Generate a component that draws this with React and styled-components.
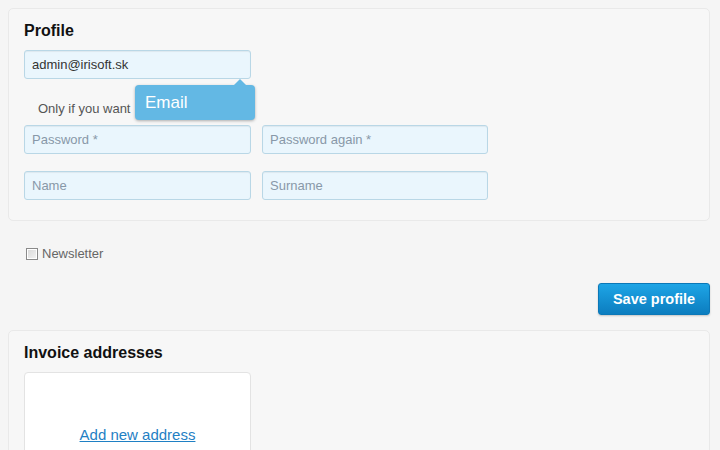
import React from "react";
import styled, { createGlobalStyle } from "styled-components";

const GlobalStyle = createGlobalStyle`
  html, body {
    margin: 0;
    background: #f5f5f5;
  }
  body {
    padding: 8px 10px 0 8px;
    font-family: "Liberation Sans", Arial, sans-serif;
    color: #333;
    overflow: hidden;
  }
`;

const Page = styled.div`
  width: 702px;
`;

const Panel = styled.section`
  background: #f7f7f7;
  border: 1px solid #e9e9e9;
  border-radius: 5px;
  padding: 12px 15px 20px;
`;

const Heading = styled.h2`
  margin: 0 0 9px;
  font-size: 16px;
  line-height: 20px;
  font-weight: bold;
  color: #111;
`;

const FieldWrap = styled.div`
  position: relative;
  width: 227px;
`;

const Input = styled.input`
  box-sizing: border-box;
  width: ${(p) => p.$width || 227}px;
  height: 29px;
  padding: 0 7px;
  border: 1px solid #b9d7e6;
  border-radius: 3px;
  background: #eaf6fd;
  box-shadow: inset 0 1px 1px rgba(0, 0, 0, 0.06);
  font-family: "Liberation Sans", Arial, sans-serif;
  font-size: 13px;
  color: #333;
  outline: none;

  &::placeholder {
    color: #8898a8;
  }
`;

const Tooltip = styled.div`
  position: absolute;
  left: 111px;
  top: 35px;
  width: 120px;
  height: 35px;
  box-sizing: border-box;
  padding-left: 10px;
  display: flex;
  align-items: center;
  background: #63b8e4;
  border-radius: 4px;
  box-shadow: 0 1px 3px rgba(0, 0, 0, 0.3);
  color: #fff;
  font-size: 17px;
  z-index: 2;

  &::before {
    content: "";
    position: absolute;
    top: -6px;
    right: 9px;
    border-left: 6px solid transparent;
    border-right: 6px solid transparent;
    border-bottom: 6px solid #63b8e4;
  }
`;

const Hint = styled.p`
  margin: 21px 0 7px 14px;
  font-size: 13px;
  line-height: 18px;
  color: #555;
`;

const Row = styled.div`
  display: flex;
  gap: 11px;
  & + & {
    margin-top: 17px;
  }
`;

const CheckRow = styled.label`
  display: flex;
  align-items: center;
  margin: 25px 0 0 18px;
  font-size: 13px;
  color: #666;
`;

const Check = styled.input.attrs({ type: "checkbox" })`
  appearance: none;
  width: 12px;
  height: 12px;
  margin: 0 4px 0 0;
  border: 1px solid #8a8a8a;
  background: linear-gradient(135deg, #d8d8d8, #f4f4f4);
  box-shadow: inset 0 0 0 1px #fff;
`;

const Actions = styled.div`
  display: flex;
  justify-content: flex-end;
  margin-top: 22px;
  margin-bottom: 15px;
`;

const SaveButton = styled.button`
  width: 112px;
  height: 32px;
  border: 1px solid #0b78b8;
  border-radius: 3px;
  background: linear-gradient(#1ea5e6, #0c7dbf);
  box-shadow: 0 1px 2px rgba(0, 0, 0, 0.2);
  color: #fff;
  font-family: "Liberation Sans", Arial, sans-serif;
  font-size: 14.5px;
  font-weight: bold;
  cursor: pointer;
`;

const AddressCard = styled.div`
  width: 227px;
  height: 130px;
  box-sizing: border-box;
  padding-top: 53px;
  background: #fff;
  border: 1px solid #e3e3e3;
  border-radius: 4px;
  text-align: center;
`;

const AddLink = styled.a`
  font-size: 15px;
  line-height: 18px;
  color: #1f80c4;
  text-decoration: underline;
`;

export default function App() {
  return (
    <Page>
      <GlobalStyle />
      <Panel>
        <Heading>Profile</Heading>
        <FieldWrap>
          <Input defaultValue="admin@irisoft.sk" />
          <Tooltip>Email</Tooltip>
        </FieldWrap>
        <Hint>Only if you want</Hint>
        <Row>
          <Input type="password" placeholder="Password *" />
          <Input type="password" placeholder="Password again *" $width={226} />
        </Row>
        <Row>
          <Input placeholder="Name" />
          <Input placeholder="Surname" $width={226} />
        </Row>
      </Panel>
      <CheckRow>
        <Check />
        Newsletter
      </CheckRow>
      <Actions>
        <SaveButton>Save profile</SaveButton>
      </Actions>
      <Panel>
        <Heading>Invoice addresses</Heading>
        <AddressCard>
          <AddLink href="#">Add new address</AddLink>
        </AddressCard>
      </Panel>
    </Page>
  );
}
